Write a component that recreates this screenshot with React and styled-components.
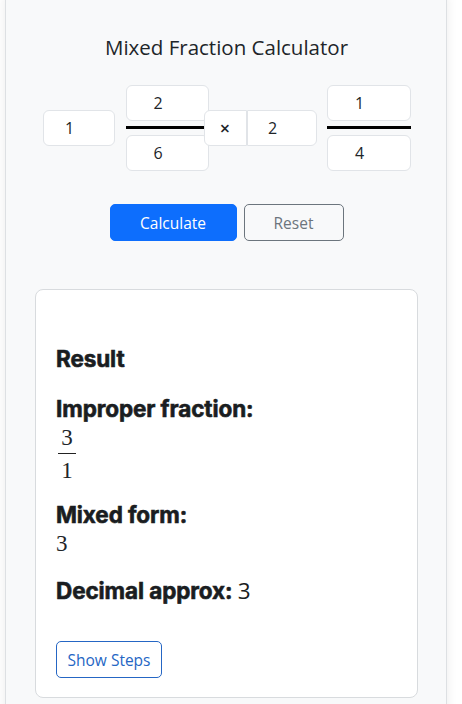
import styled, { createGlobalStyle } from 'styled-components'

const GlobalStyle = createGlobalStyle`
  body {
    margin: 0;
    background: #ffffff;
    font-family: "Open Sans", "Noto Sans", sans-serif;
    color: #212529;
  }
`

const Page = styled.div`
  padding: 0 15px 0 5px;
  height: 704px;
  overflow: hidden;
`

const Panel = styled.div`
  margin-top: -8px;
  background: #f8f9fa;
  border: 1px solid #dde0e3;
  border-radius: 8px;
  box-shadow: 0 0 12px rgba(0, 0, 0, 0.08);
  padding: 40px 28px 30px 29px;
  min-height: 760px;
`

const Title = styled.h4`
  margin: 0 0 24px;
  text-align: center;
  font-size: 20.5px;
  font-weight: 400;
  line-height: 28px;
  color: #212529;
`

const InputRow = styled.div`
  display: flex;
  align-items: center;
  justify-content: center;
`

const Box = styled.input`
  box-sizing: border-box;
  width: ${p => p.$w}px;
  height: 36px;
  border: 1px solid #e1e4e8;
  border-radius: 6px;
  background: #fff;
  font-family: "Open Sans", sans-serif;
  font-size: 16px;
  color: #212529;
  text-align: center;
  padding: 0 18px 0 0;
  outline: none;
`

const WholeBox = styled(Box)`
  margin-right: ${p => p.$gap}px;
`

const JoinedBox = styled(Box)`
  border-radius: 0 6px 6px 0;
  margin-right: 10px;
`

const FractionColumn = styled.div`
  display: flex;
  flex-direction: column;
  width: ${p => p.$w}px;
`

const FractionBar = styled.div`
  height: 3px;
  background: #000;
  margin: 5px 0 6px;
`

const Operator = styled.span`
  position: relative;
  z-index: 1;
  box-sizing: border-box;
  width: 43px;
  height: 36px;
  margin-left: -5px;
  display: flex;
  align-items: center;
  justify-content: center;
  background: #fff;
  border: 1px solid #e1e4e8;
  border-radius: 6px 0 0 6px;
  font-size: 18px;
  font-weight: 600;
  color: #212529;
`

const ButtonRow = styled.div`
  display: flex;
  justify-content: center;
  gap: 7px;
  margin-top: 33px;
`

const Button = styled.button`
  box-sizing: border-box;
  width: ${p => p.$w}px;
  height: 37px;
  border-radius: 5px;
  font-family: "Open Sans", sans-serif;
  font-size: 15.5px;
  cursor: pointer;
  border: 1px solid ${p => (p.$primary ? '#0d6efd' : '#6c757d')};
  background: ${p => (p.$primary ? '#0d6efd' : 'transparent')};
  color: ${p => (p.$primary ? '#fff' : '#6c757d')};
`

const ResultCard = styled.div`
  margin-top: 48px;
  background: #fff;
  border: 1px solid #d8dbde;
  border-radius: 8px;
  padding: 56px 20px 19px;
`

const Label = styled.div`
  font-family: "Inter", sans-serif;
  font-weight: 700;
  font-size: 22.5px;
  line-height: 26px;
  letter-spacing: -0.1px;
  -webkit-text-stroke: 0.6px #1a1d21;
  color: #1a1d21;
  margin-top: ${p => p.$mt || 0}px;
`

const Value = styled.span`
  font-family: "Open Sans", sans-serif;
  font-weight: 400;
  letter-spacing: 0;
  -webkit-text-stroke: 0;
`

const MathFrac = styled.div`
  display: inline-flex;
  flex-direction: column;
  align-items: center;
  margin: 5px 0 0 2px;
  font-family: "Liberation Serif", serif;
  font-size: 23px;
  line-height: 22px;
`

const MathBar = styled.div`
  align-self: stretch;
  width: 18px;
  height: 1px;
  background: #222;
  margin: 4px 0 6px;
`

const MathValue = styled.div`
  font-family: "Liberation Serif", serif;
  font-size: 23px;
  line-height: 24px;
  margin-top: 4px;
`

const StepsButton = styled.button`
  box-sizing: border-box;
  margin-top: 37px;
  width: 106px;
  height: 37px;
  border: 1px solid #2566c4;
  border-radius: 5px;
  background: transparent;
  color: #2566c4;
  font-family: "Open Sans", sans-serif;
  font-size: 15.5px;
  cursor: pointer;
`

export default function App() {
  return (
    <Page>
      <GlobalStyle />
      <Panel>
        <Title>Mixed Fraction Calculator</Title>
        <InputRow>
          <WholeBox $w={72} $gap={11} defaultValue="1" />
          <FractionColumn $w={83}>
            <Box $w={83} defaultValue="2" />
            <FractionBar />
            <Box $w={83} defaultValue="6" />
          </FractionColumn>
          <Operator>×</Operator>
          <JoinedBox $w={70} defaultValue="2" />
          <FractionColumn $w={84}>
            <Box $w={84} defaultValue="1" />
            <FractionBar />
            <Box $w={84} defaultValue="4" />
          </FractionColumn>
        </InputRow>
        <ButtonRow>
          <Button $primary $w={127}>Calculate</Button>
          <Button $w={100}>Reset</Button>
        </ButtonRow>
        <ResultCard>
          <Label>Result</Label>
          <Label $mt={24}>Improper fraction:</Label>
          <MathFrac>
            <span>3</span>
            <MathBar />
            <span>1</span>
          </MathFrac>
          <Label $mt={20}>Mixed form:</Label>
          <MathValue>3</MathValue>
          <Label $mt={22}>
            Decimal approx: <Value>3</Value>
          </Label>
          <StepsButton>Show Steps</StepsButton>
        </ResultCard>
      </Panel>
    </Page>
  )
}
